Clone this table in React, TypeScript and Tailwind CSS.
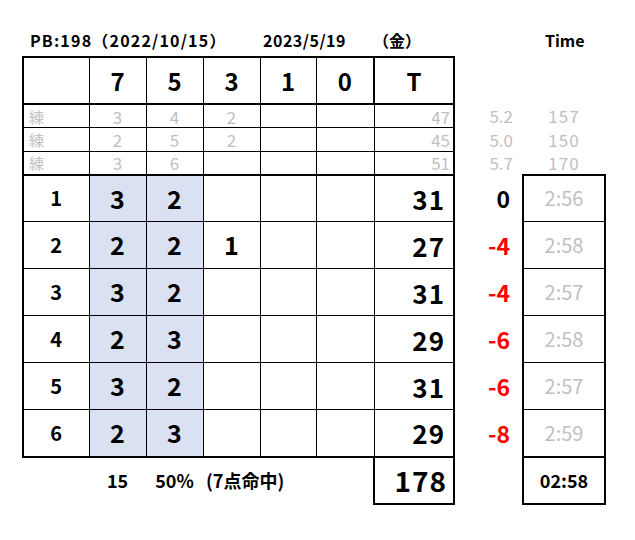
import React from "react";

const F = { fontFamily: '"Noto Sans CJK JP", "Noto Sans", sans-serif' };

const practice = [
  { v: ["3", "4", "2"], t: "47", a: "5.2", b: "157" },
  { v: ["2", "5", "2"], t: "45", a: "5.0", b: "150" },
  { v: ["3", "6", ""], t: "51", a: "5.7", b: "170" },
];

const rows = [
  { n: "1", v: ["3", "2", "", "", ""], t: "31", d: "0", time: "2:56" },
  { n: "2", v: ["2", "2", "1", "", ""], t: "27", d: "-4", time: "2:58" },
  { n: "3", v: ["3", "2", "", "", ""], t: "31", d: "-4", time: "2:57" },
  { n: "4", v: ["2", "3", "", "", ""], t: "29", d: "-6", time: "2:58" },
  { n: "5", v: ["3", "2", "", "", ""], t: "31", d: "-6", time: "2:57" },
  { n: "6", v: ["2", "3", "", "", ""], t: "29", d: "-8", time: "2:59" },
];

export default function App() {
  return (
    <div className="w-[635px] h-[540px] bg-white text-black" style={F}>
      <div className="flex items-end h-[50px] pl-[30px] pb-[2px] text-[16px] font-bold leading-none">
        <span className="w-[233px] tracking-[1.2px]">PB:198（2022/10/15）</span>
        <span className="w-[110px] tracking-[0.5px]">2023/5/19</span>
        <span className="w-[172px]">（金）</span>
        <span>Time</span>
      </div>
      <div className="pl-[22px] pt-[6px]">
        <table className="border-collapse table-fixed w-[582px]">
          <colgroup>
            <col className="w-[66px]" />
            <col className="w-[57px]" />
            <col className="w-[57px]" />
            <col className="w-[57px]" />
            <col className="w-[56px]" />
            <col className="w-[58px]" />
            <col className="w-[80px]" />
            <col className="w-[69px]" />
            <col className="w-[82px]" />
          </colgroup>
          <tbody>
            <tr className="h-[47px] text-[24px] font-bold">
              <td className="border-2 border-black border-r-[1.5px]"></td>
              {["7", "5", "3", "1", "0", "T"].map((h, i) => (
                <td
                  key={i}
                  className={`border-y-2 border-black text-center ${i === 5 ? "border-x-2" : "border-x"}`}
                >
                  {h}
                </td>
              ))}
              <td></td>
              <td></td>
            </tr>
            {practice.map((p, r) => (
              <tr key={r} className="h-[23.5px] text-[17px] text-[#bfbfbf] leading-[17px]">
                <td className="border-l-2 border-r border-y border-black pl-[5px] text-[15px] leading-[15px] p-0">練</td>
                {[0, 1, 2].map((i) => (
                  <td key={i} className="border border-black text-center p-0">
                    {p.v[i]}
                  </td>
                ))}
                <td className="border border-black p-0"></td>
                <td className="border border-black p-0"></td>
                <td className="border-l border-r-2 border-y border-black text-right pr-[3px] py-0">{p.t}</td>
                <td className="text-right pr-[10px] py-0">{p.a}</td>
                <td className="text-center p-0 tracking-[1px]">{p.b}</td>
              </tr>
            ))}
            {rows.map((row, r) => (
              <tr key={r} className="h-[47px]">
                <td
                  className={`border-l-2 border-r border-black text-center text-[20px] font-bold ${r === 0 ? "border-t-2" : "border-t"} ${r === 5 ? "border-b-2" : "border-b"}`}
                >
                  {row.n}
                </td>
                {row.v.map((v, i) => (
                  <td
                    key={i}
                    className={`border-x border-black text-center text-[25px] font-bold ${i < 2 ? "bg-[#d9e1f2]" : ""} ${r === 0 ? "border-t-2" : "border-t"} ${r === 5 ? "border-b-2" : "border-b"}`}
                  >
                    {v}
                  </td>
                ))}
                <td
                  className={`border-l border-r-2 border-black text-right pr-[8px] text-[26px] font-bold tracking-[1px] ${r === 0 ? "border-t-2" : "border-t"} ${r === 5 ? "border-b-2" : "border-b"}`}
                >
                  {row.t}
                </td>
                <td
                  className={`text-right pr-[12px] text-[23px] font-bold ${row.d === "0" ? "text-black" : "text-[#ff0000]"}`}
                >
                  {row.d}
                </td>
                <td
                  className={`border-x-2 border-black text-center text-[20px] text-[#bfbfbf] ${r === 0 ? "border-t-2" : "border-t"} border-b`}
                >
                  {row.time}
                </td>
              </tr>
            ))}
            <tr className="h-[47px] font-bold">
              <td></td>
              <td className="text-center text-[18px]">15</td>
              <td className="text-center text-[18px]">50%</td>
              <td colSpan={3} className="text-left text-[18px] pl-[3px]">(7点命中)</td>
              <td className="border-2 border-black text-right pr-[6px] text-[28px] tracking-[1px]">178</td>
              <td></td>
              <td className="border-2 border-black text-center text-[18px]">02:58</td>
            </tr>
          </tbody>
        </table>
      </div>
    </div>
  );
}
